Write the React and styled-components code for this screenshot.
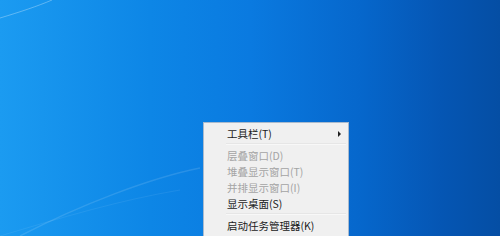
import React from 'react';
import styled, { createGlobalStyle } from 'styled-components';

const GlobalStyle = createGlobalStyle`
html, body {
    margin: 0;
    padding: 0;
    overflow: hidden;
}
`;

const Desktop = styled.div`
position: relative;
width: 500px;
height: 236px;
overflow: hidden;
background: linear-gradient(90deg, #1b9bf1 0%, #0d86e6 30%, #0a7ae0 50%, #0667cc 72%, #0556b4 88%, #054ea4 100%);
`;

const Streaks = styled.svg`
position: absolute;
left: 0;
top: 0;
`;

const Menu = styled.ul`
position: absolute;
left: 203px;
top: 122px;
width: 144px;
height: 130px;
margin: 0;
padding: 2px 0 0;
list-style: none;
background: #f0f0f0;
border: 1px solid #a9bacd;
font-family: "Noto Sans CJK SC", "Liberation Sans", sans-serif;
font-size: 10.5px;
`;

const Item = styled.li`
position: relative;
display: flex;
align-items: center;
height: 16px;
padding-left: 23px;
color: ${({ disabled }) => (disabled ? '#a4a4a4' : '#1b1b1b')};
white-space: nowrap;
`;

const Arrow = styled.span`
position: absolute;
right: 7px;
top: 6px;
width: 0;
height: 0;
border-top: 3px solid transparent;
border-bottom: 3px solid transparent;
border-left: 3px solid #202020;
`;

const Separator = styled.li`
height: 1px;
margin: 2px 2px 2px 22px;
background: #e6e6e6;
border-bottom: 1px solid #f8f8f8;
`;

const items = [
    { label: '工具栏(T)', sub: true },
    { sep: true },
    { label: '层叠窗口(D)', disabled: true },
    { label: '堆叠显示窗口(T)', disabled: true },
    { label: '并排显示窗口(I)', disabled: true },
    { label: '显示桌面(S)' },
    { sep: true },
    { label: '启动任务管理器(K)' },
];

export default function App() {
    return (
        <Desktop>
            <GlobalStyle />
            <Streaks width="500" height="236" viewBox="0 0 500 236">
                <path d="M0 18 C 20 12, 38 6, 52 0" stroke="rgba(255,255,255,0.3)" strokeWidth="1" fill="none" />
                <path d="M20 236 C 80 205, 150 178, 200 168" stroke="rgba(255,255,255,0.12)" strokeWidth="1.5" fill="none" />
                <path d="M0 236 C 60 218, 120 200, 180 190" stroke="rgba(255,255,255,0.07)" strokeWidth="1" fill="none" />
            </Streaks>
            <Menu>
                {items.map((item, i) => item.sep
                    ? <Separator key={i} />
                    : <Item key={i} disabled={item.disabled}>
                        {item.label}
                        {item.sub && <Arrow />}
                    </Item>
                )}
            </Menu>
        </Desktop>
    );
}
